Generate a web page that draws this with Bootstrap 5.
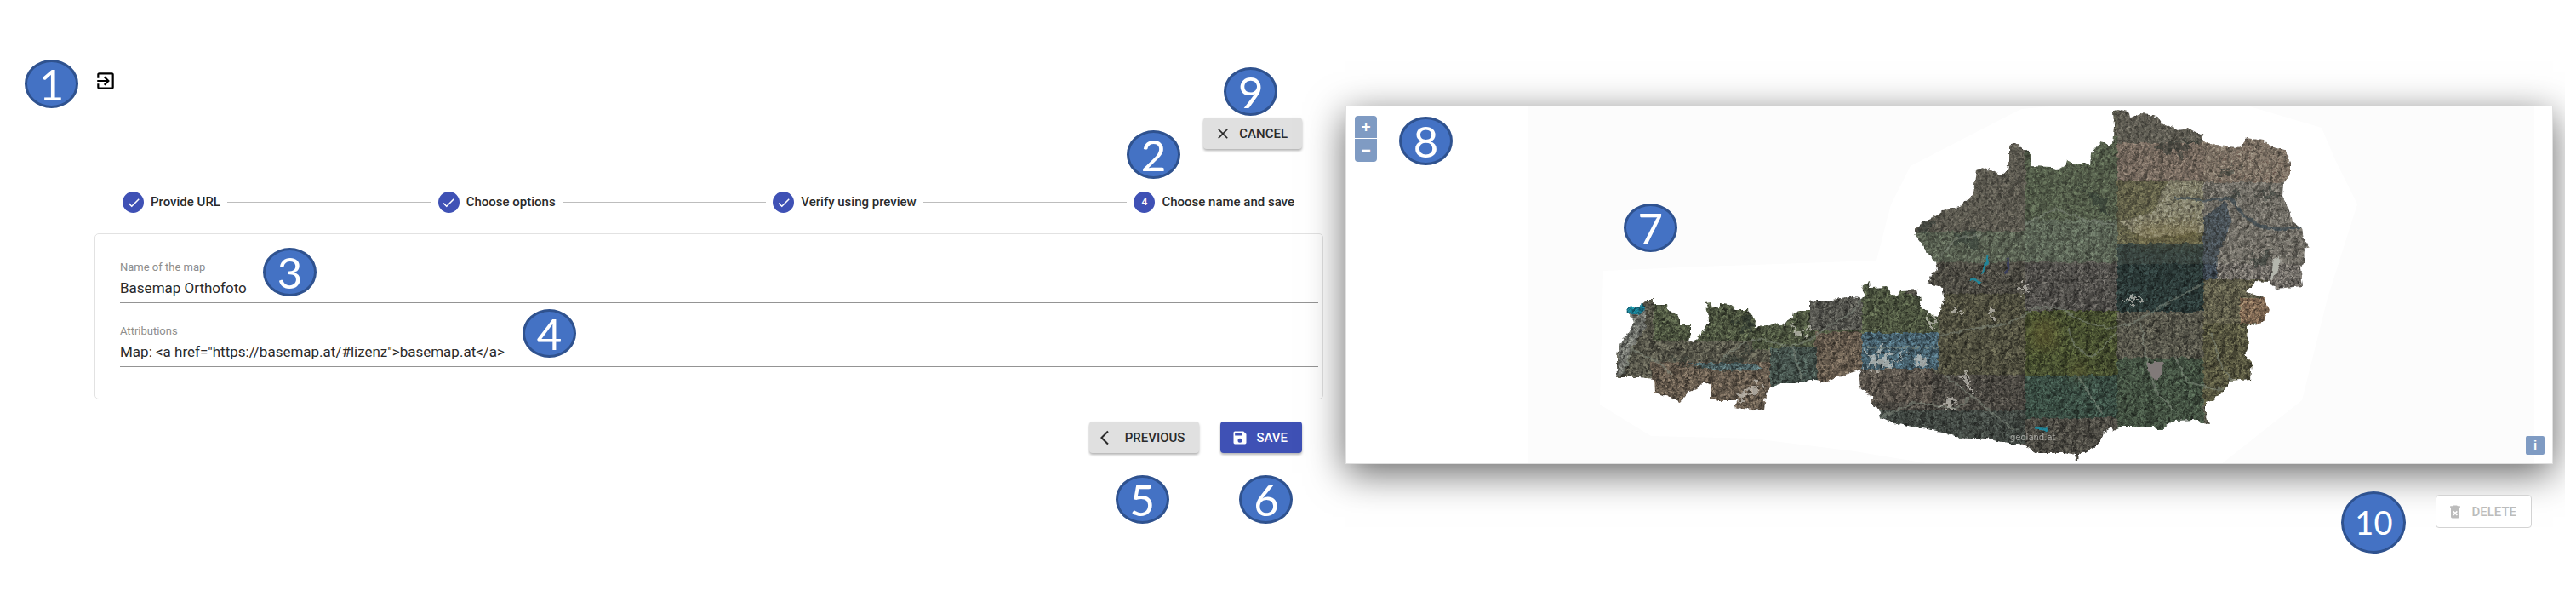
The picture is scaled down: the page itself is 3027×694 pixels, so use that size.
<!DOCTYPE html>
<html lang="en">
<head>
<meta charset="utf-8">
<meta name="viewport" content="width=device-width, initial-scale=1">
<title>Add map</title>
<link href="https://cdn.jsdelivr.net/npm/bootstrap@5.3.0/dist/css/bootstrap.min.css" rel="stylesheet">
<style>
  body { font-family: Roboto, "Liberation Sans", sans-serif; color: #2b2b2b; background: #fff; }
  .editor { display: grid; grid-template-columns: 1444fr 1419fr; column-gap: 26px; margin-right: 13px; padding: 82px 14px 32px 111px; overflow: hidden; }

  /* numbered markers */
  .pin { position: absolute; display: flex; align-items: center; justify-content: center; width: 63px; height: 57px; border: 3px solid #2f528f; border-radius: 50%; background: #4472c4; color: #fff; font: 400 51px/51px Lato, "Liberation Sans", sans-serif; z-index: 3; }
  .pin-exit { left: -82px; top: -12px; }
  .pin-cancel { left: 24px; bottom: 39px; }
  .pin-steps { right: 168px; top: -72px; }
  .pin-name { left: 168px; top: -14px; }
  .pin-attr { left: 473px; top: -17px; }
  .pin-previous { left: 31px; top: 63px; }
  .pin-save { left: 22px; top: 63px; }
  .pin-zoom { left: 62px; top: 12px; }
  .pin-map { left: 23%; top: 114px; }
  .pin-delete { position: static; width: 76px; height: 73px; font-size: 38px; }

  .exit-btn { color: #000; line-height: 1; }
  .act { display: flex; align-items: center; gap: 9px; height: 37px; padding: 0 17px 0 13px; border: 0; border-radius: 4px; font-size: 15px; font-weight: 500; line-height: 20px; color: #2b2b2b; background: #e0e0e0; box-shadow: 0 2px 3px rgba(0,0,0,.3); }
  .act svg { width: 20px; height: 20px; fill: currentColor; }
  .act-save { background: #3f51b5; color: #fff; }
  .act-delete, .act-delete:disabled { background: #fff; color: #bcbcbc; border: 1px solid #d3d3d3; box-shadow: none; opacity: 1; padding: 0 17px 0 12px; position: relative; z-index: 2; height: 39px; }
  .side-pad { padding-right: 25px; }
  .top-row { margin-top: 30px; }
  .bottom-row { margin-top: 26px; gap: 25px; }

  .steps { margin: 50px 0 24px; padding: 0 34px 0 33px; font-size: 15px; font-weight: 500; line-height: 25px; }
  .dot { display: flex; align-items: center; justify-content: center; width: 25px; height: 25px; border-radius: 50%; background: #3f51b5; color: #fff; font-size: 12px; }
  .rail { height: 1px; background: #bdbdbd; }

  .form-box { border: 1px solid #e2e2e2; border-radius: 5px; padding: 30px 5px 37px 29px; }
  .field label { display: block; font-size: 13px; line-height: 18px; color: #8e8e8e; }
  .field input { display: block; width: 100%; height: 33px; padding: 0 0 2px; border: 0; border-bottom: 1px solid #949494; border-radius: 0; outline: 0; background: transparent; font-size: 17px; line-height: 22px; color: #2b2b2b; }
  .field + .field { margin-top: 24px; }

  .map-box { margin-top: 42px; border: 1px solid #e0e0e0; background: #fff; box-shadow: 0 11px 42px rgba(0,0,0,.6); position: relative; }
  .map-box > svg { display: block; width: 100%; height: auto; }
  .ctl { display: flex; align-items: center; justify-content: center; border: 0; padding: 0; background: #7f9bc3; color: #fff; font: 700 19px/22px "Liberation Sans", sans-serif; }
  .zoomers { position: absolute; left: 10px; top: 11px; }
  .zoomers .ctl { width: 26px; height: 27px; }
  .info { position: absolute; right: 9px; bottom: 10px; width: 22px; height: 22px; border-radius: 2px; font-size: 15px; }
  .map-foot { padding: 32px 25px 0 0; gap: 35px; }
</style>
</head>
<body>
<main class="editor">
  <section aria-label="Map settings">
    <div class="position-relative d-inline-block align-top">
      <span class="pin pin-exit">1</span>
      <button type="button" class="exit-btn btn p-0 border-0 d-block" aria-label="Leave"><svg width="26" height="26" viewBox="0 0 24 24" fill="currentColor" class="d-block"><path d="M19 3H5C3.890 3 3 3.890 3 5v4h2V5h14v14H5v-4H3v4a2 2 0 0 0 2 2h14a2 2 0 0 0 2-2V5C21 3.890 20.100 3 19 3M10.080 15.580 11.500 17l5-5-5-5-1.420 1.410L12.670 11H3v2h9.670z"/></svg></button>
    </div>
    <div class="top-row d-flex justify-content-end side-pad">
      <div class="position-relative">
        <span class="pin pin-cancel">9</span>
        <button type="button" class="act"><svg viewBox="0 0 24 24"><path d="M19 6.410 17.590 5 12 10.590 6.410 5 5 6.410 10.590 12 5 17.590 6.410 19 12 13.410 17.590 19 19 17.590 13.410 12z"/></svg>CANCEL</button>
      </div>
    </div>
    <div class="position-relative">
      <span class="pin pin-steps">2</span>
      <div class="steps d-flex align-items-center gap-2">
        <span class="dot"><svg width="18" height="18" viewBox="0 0 24 24" fill="#fff"><path d="M21 7 9 19l-5.500-5.500 1.410-1.410L9 16.170 19.590 5.590z"/></svg></span><span>Provide URL</span>
        <span class="rail flex-fill"></span>
        <span class="dot"><svg width="18" height="18" viewBox="0 0 24 24" fill="#fff"><path d="M21 7 9 19l-5.500-5.500 1.410-1.410L9 16.170 19.590 5.590z"/></svg></span><span>Choose options</span>
        <span class="rail flex-fill"></span>
        <span class="dot"><svg width="18" height="18" viewBox="0 0 24 24" fill="#fff"><path d="M21 7 9 19l-5.500-5.500 1.410-1.410L9 16.170 19.590 5.590z"/></svg></span><span>Verify using preview</span>
        <span class="rail flex-fill"></span>
        <span class="dot">4</span><span>Choose name and save</span>
      </div>
    </div>
    <form class="form-box">
      <div class="field position-relative">
        <label for="map-name">Name of the map</label>
        <input id="map-name" type="text" value="Basemap Orthofoto">
        <span class="pin pin-name">3</span>
      </div>
      <div class="field position-relative">
        <label for="map-attr">Attributions</label>
        <input id="map-attr" type="text" value="Map: &lt;a href=&quot;https://basemap.at/#lizenz&quot;&gt;basemap.at&lt;/a&gt;">
        <span class="pin pin-attr">4</span>
      </div>
    </form>
    <div class="bottom-row d-flex justify-content-end side-pad">
      <div class="position-relative">
        <button type="button" class="act"><svg viewBox="0 0 24 24"><path d="M11.670 3.870 9.900 2.100 0 12l9.900 9.900 1.770-1.770L3.540 12z"/></svg>PREVIOUS</button>
        <span class="pin pin-previous">5</span>
      </div>
      <div class="position-relative">
        <button type="button" class="act act-save"><svg viewBox="0 0 24 24"><path d="M15 9H5V5h10M12 19a3 3 0 0 1-3-3 3 3 0 0 1 3-3 3 3 0 0 1 3 3 3 3 0 0 1-3 3M17 3H5c-1.110 0-2 .9-2 2v14a2 2 0 0 0 2 2h14a2 2 0 0 0 2-2V7z"/></svg>SAVE</button>
        <span class="pin pin-save">6</span>
      </div>
    </div>
  </section>

  <section aria-label="Map preview">
    <div class="map-box">
      <svg viewBox="1582 125 1417 419" role="img" aria-label="Orthophoto of Austria">
        <defs>
          <clipPath id="land"><path id="outline" d="M1899 443L1900 435 1900 417 1902 405 1910 397 1916 385 1920 378 1919 375 1913 368 1912 361 1925 360 1932 355 1933 351 1943 351 1943 358 1959 358 1960 366 1967 367 1973 373 1973 382 1987 382 1987 392 1985 400 1990 402 1997 395 2002 387 2008 378 2007 368 2004 355 2010 354 2012 362 2021 361 2023 357 2033 358 2040 363 2054 363 2056 368 2060 370 2063 378 2062 384 2077 383 2090 378 2092 383 2105 375 2107 367 2115 365 2127 365 2127 355 2133 353 2150 353 2163 350 2173 348 2188 351 2192 347 2187 338 2193 333 2197 331 2198 338 2217 337 2223 345 2230 347 2233 341 2253 340 2257 352 2256 358 2264 367 2278 371 2281 360 2284 347 2282 337 2266 333 2269 323 2276 317 2274 307 2263 295 2259 287 2250 275 2250 270 2260 260 2274 255 2284 247 2303 243 2319 228 2320 217 2322 200 2330 197 2344 202 2351 207 2359 200 2361 190 2361 170 2368 168 2375 173 2387 182 2387 195 2409 196 2418 200 2426 195 2428 188 2435 192 2451 192 2456 195 2457 180 2468 167 2482 170 2484 148 2483 130 2489 128 2503 132 2504 138 2515 133 2526 134 2538 140 2541 145 2559 153 2573 151 2587 158 2589 165 2603 171 2630 173 2637 167 2639 162 2660 165 2666 172 2685 176 2691 190 2691 203 2683 217 2682 230 2691 247 2694 260 2705 268 2707 280 2713 289 2708 292 2707 310 2703 313 2706 336 2675 339 2669 335 2666 331 2650 330 2648 335 2639 343 2660 350 2666 363 2659 378 2641 383 2642 407 2639 417 2646 425 2644 445 2621 447 2614 458 2605 467 2592 472 2592 487 2596 498 2587 497 2582 493 2555 494 2544 500 2541 505 2535 505 2533 501 2494 501 2484 506 2482 502 2471 508 2467 522 2451 530 2444 534 2441 541 2438 535 2426 532 2394 532 2380 523 2360 521 2334 515 2298 513 2287 508 2259 503 2226 497 2210 490 2208 480 2200 477 2200 465 2187 458 2184 442 2188 434 2160 442 2147 449 2133 446 2108 450 2093 450 2080 455 2075 463 2073 482 2047 480 2038 478 2042 470 2020 470 2010 468 2010 453 2002 448 1993 457 1985 460 1975 472 1963 467 1945 461 1944 445 1927 443Z"/></clipPath>
          <filter id="edge" x="0" y="0" width="100%" height="100%" color-interpolation-filters="sRGB"><feTurbulence type="fractalNoise" baseFrequency=".16" numOctaves="2" seed="4"/><feDisplacementMap in="SourceGraphic" scale="6" xChannelSelector="R" yChannelSelector="G"/></filter>
          <filter id="relief" x="0" y="0" width="100%" height="100%" color-interpolation-filters="sRGB"><feTurbulence type="turbulence" baseFrequency=".07 .06" numOctaves="4" seed="11"/><feColorMatrix values="0 0 0 0 0  0 0 0 0 0  0 0 0 0 0  1.2 0 0 0 0"/><feDiffuseLighting surfaceScale="5" diffuseConstant=".76" lighting-color="#fff"><feDistantLight azimuth="205" elevation="48"/></feDiffuseLighting></filter>
          <filter id="grain" x="0" y="0" width="100%" height="100%" color-interpolation-filters="sRGB"><feTurbulence type="fractalNoise" baseFrequency=".35" numOctaves="3" seed="7"/><feColorMatrix values="1.900 0 0 0 -.45  1.900 0 0 0 -.45  1.900 0 0 0 -.45  0 0 0 0 1"/></filter>
          <filter id="tatter" x="-20%" y="-20%" width="140%" height="140%" color-interpolation-filters="sRGB"><feTurbulence type="fractalNoise" baseFrequency=".12" numOctaves="3" seed="3"/><feDisplacementMap in="SourceGraphic" scale="26" xChannelSelector="R" yChannelSelector="G"/></filter>
          <filter id="soft" x="-30%" y="-30%" width="160%" height="160%"><feGaussianBlur stdDeviation="7"/></filter>
        </defs>
        <path fill="#fcfcfc" d="M1796 124h1182v421H1796z"/>
        <path fill="#fff" d="M1884 318 2000 313 2205 306 2222 240 2245 195 2375 128 2420 124H2640L2728 150 2745 190 2770 240 2735 350 2705 470 2610 545H2270L2180 530 2060 515 1940 512 1880 475Z"/>
        <g filter="url(#edge)"><g clip-path="url(#land)" style="isolation:isolate">
          <path fill="#57564a" d="M1880 120h860v430H1880z"/>
          <path fill="#4c543f" d="M1943 340h120v60h-120zM2060 360h130v50h-130zM2188 330h100v61h-100z"/>
          <path fill="#655a4d" d="M1940 425h140v60h-140zM2133 390h55v60h-55z"/>
          <path fill="#43504a" d="M2080 408h55v50h-55z"/>
          <path fill="#54544e" d="M2127 340h61v48h-61z"/>
          <path fill="#6d6f69" d="M1910 365 1934 362 1934 385 1915 410 1910 440 1900 440 1902 405Z"/>
          <path fill="#177286" d="M1908 356h22l4 8-10 5h-16z"/>
          <path fill="#536a6c" d="M1983 426h75l15 8-60 1z"/>
          <path fill="#56534b" d="M2240 160h140v112H2240z"/>
          <path fill="#535d4e" d="M2240 272h140v36H2240z"/>
          <path fill="#4d4b43" d="M2240 308h140v38H2240z"/>
          <path fill="#4c5844" d="M2380 160h108v100H2380z"/>
          <path fill="#566253" d="M2380 258h108v52H2380z"/>
          <path fill="#514f4b" d="M2380 308h108v58H2380z"/>
          <path fill="#5a574f" d="M2488 120h101v92H2488z"/>
          <path fill="#75665c" d="M2488 168h101v44H2488z"/>
          <path fill="#5f5d43" d="M2488 212h101v74H2488z"/>
          <path fill="#85826c" d="M2548 212h41v60l-70 8-30-20 40-10z"/>
          <path fill="#2b3937" d="M2488 286h101v80H2488z"/>
          <path fill="#7e7064" d="M2589 150h130v64H2589z"/>
          <path fill="#716d67" d="M2589 214h130v130H2589z"/>
          <path fill="#3f4953" d="M2589 255 2615 236 2622 260 2606 300 2604 345 2589 335Z"/>
          <path fill="#4f4e3e" d="M2278 345h102v95H2278z"/>
          <path fill="#46606c" d="M2188 391h90v42h-90z"/>
          <path fill="#4b4842" d="M2180 440h200v90H2180z"/>
          <path fill="#59534b" d="M2185 433h85v40h-85z"/>
          <path fill="#404641" d="M2205 482h175v40H2205z"/>
          <path fill="#464e2f" d="M2380 365h110v76H2380z"/>
          <path fill="#394c42" d="M2380 441h110v50H2380z"/>
          <path fill="#4c4a43" d="M2380 491h110v55H2380z"/>
          <path fill="#56554a" d="M2488 366h101v54H2488z"/>
          <path fill="#414f40" d="M2488 420h101v90H2488z"/>
          <path fill="#5e5c49" d="M2589 328h75v55h-75z"/>
          <path fill="#7c6651" d="M2632 350h40v32h-40z"/>
          <path fill="#55543e" d="M2589 380h65v95h-65z"/>
          <path d="M1880 120h860v430H1880z" filter="url(#relief)" style="mix-blend-mode:overlay" opacity=".3"/>
          <path d="M1880 120h860v430H1880z" filter="url(#grain)" style="mix-blend-mode:overlay" opacity=".4"/>
          <path d="M2240 120h480v190H2240z" fill="#6f6c60" opacity=".2"/>
          <g filter="url(#tatter)" fill="#dddad2" opacity=".6">
            <path d="M2192 432l5-22 4 14 8-18 2 16 12-14-4 18 18-14-6 14-14 2-8 8-4-6zM2250 416l3 10 6-8 2 12-10 2zM2100 384l25 2 10 4-24 1zM2040 472l12-17 17-4-9 12zM2277 480l12-13 14 9zM2300 440l6-4 10 16 10 12-10-7z"/>
            <path d="M2297 364h9v6h-9zM2335 368h9v6h-9zM2264 374h14v6h-14zM2376 336h9v8h-9zM2498 350h14v3h-14z"/>
          </g>
          <g filter="url(#tatter)" fill="#252f2b" opacity=".45">
            <path d="M2292 272 2323 276 2326 289 2306 292ZM2600 206 2626 194 2635 197 2620 206ZM2640 312 2655 300 2672 292 2660 311ZM2250 265 2268 259 2270 275ZM2522 172 2550 170 2586 164 2560 182ZM2622 222l8 2-6 18zM2650 223l30 3-15 8z"/>
            <path d="M1950 421 2000 427 2040 420 2062 403 2040 431 2000 432ZM2040 368 2060 375 2055 398ZM2420 212 2480 235 2475 255 2450 225Z"/>
          </g>
          <g fill="none" stroke="#8b9487" stroke-width="2" opacity=".5">
            <path d="M1907 440 1918 410 1950 426 1965 440M2023 421 2050 402 2070 398 2100 407 2125 400 2150 382 2175 368 2190 350M2105 405l12 40M2278 395 2310 387 2360 380 2394 361 2420 362 2450 378 2474 385 2505 380 2535 362 2586 335M2458 420 2488 390M2458 420 2437 405 2430 385M2188 408h90M2210 490 2250 472 2300 480 2314 466M2285 440 2320 467 2360 500 2366 505M2515 380l8 45 10 35 20 20M2556 418 2570 448 2600 457 2620 456M2598 390 2610 430 2625 450M2440 440 2470 485"/>
            <path d="M2380 263 2415 245 2450 258 2488 265M2281 300 2300 280 2330 275"/>
          </g>
          <path fill="none" stroke="#34434d" stroke-width="3" opacity=".65" d="M2555 232 2590 235 2622 233 2633 250 2655 266 2680 269 2705 267"/>
          <path fill="none" stroke="#218599" stroke-width="3" d="M2336 300 2334 310 2329 321M2316 327l12 6M2391 502l10 1 5 3"/>
          <path fill="none" stroke="#3a3e59" stroke-width="3" d="M2359 303l1 12-4 6"/>
          <path fill="#817a79" d="M2524 425h18l-2 15-7 9-10-15z"/>
          <path fill="#b4b6ad" d="M2672 303 2680 300 2679 313 2672 326 2668 330Z"/>
          <g filter="url(#soft)" fill="#7b6a35" opacity=".3"><path d="M2387 375h30v35h-30zM2510 262h75v22h-75zM2437 427h12v18h-12z"/></g>
        </g></g>
        <text x="2362" y="517" font-size="10" fill="#d9d9d5" opacity=".65" font-family="DejaVu Sans, sans-serif">geoland.at</text>
      </svg>
      <div class="zoomers d-flex flex-column">
        <button type="button" class="ctl rounded-top-1 border-bottom border-white" aria-label="Zoom in">+</button>
        <button type="button" class="ctl rounded-bottom-1" aria-label="Zoom out">−</button>
      </div>
      <span class="pin pin-zoom">8</span>
      <span class="pin pin-map">7</span>
      <button type="button" class="ctl info" aria-label="Attribution">i</button>
    </div>
    <div class="map-foot d-flex justify-content-end align-items-start">
      <span class="pin pin-delete">10</span>
      <button type="button" class="act act-delete mt-1" disabled><svg viewBox="0 0 24 24"><path d="M6 19a2 2 0 0 0 2 2h8a2 2 0 0 0 2-2V7H6zM8.460 11.880l1.410-1.410L12 12.590l2.120-2.120 1.410 1.410L13.410 14l2.120 2.120-1.410 1.410L12 15.410l-2.120 2.120-1.410-1.410L10.590 14zM15.500 4l-1-1h-5l-1 1H5v2h14V4z"/></svg>DELETE</button>
    </div>
  </section>
</main>
<script src="https://cdn.jsdelivr.net/npm/bootstrap@5.3.0/dist/js/bootstrap.bundle.min.js"></script>
</body>
</html>
